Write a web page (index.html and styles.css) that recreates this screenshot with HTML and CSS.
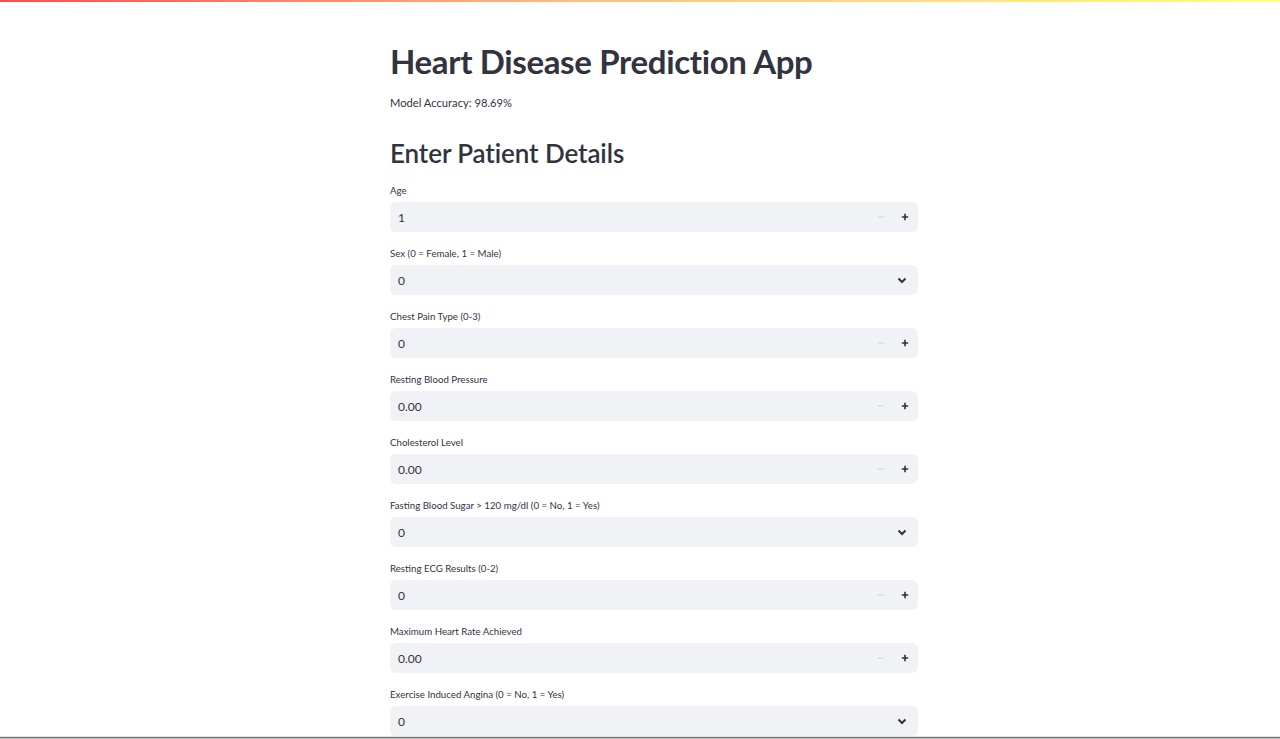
FILE: index.html
```html
<!DOCTYPE html>
<html>
<head>
<meta charset="utf-8">
<link rel="stylesheet" href="styles.css">
</head>
<body>
<div class="topbar"></div>
<main class="main">
  <h1 class="title">Heart Disease Prediction App</h1>
  <p class="acc">Model Accuracy: 98.69%</p>
  <h2 class="subtitle">Enter Patient Details</h2>

  <div class="field">
    <label class="label">Age</label>
    <div class="input"><span class="val">1</span>
      <span class="steps">
        <svg class="minus" viewBox="0 0 10 10"><path d="M1 5h8"/></svg>
        <svg class="plus" viewBox="0 0 10 10"><path d="M1 5h8M5 1v8"/></svg>
      </span></div>
  </div>

  <div class="field">
    <label class="label">Sex (0 = Female, 1 = Male)</label>
    <div class="input"><span class="val">0</span>
      <svg class="chev" viewBox="0 0 10 10"><path d="M1.5 3.5L5 7l3.5-3.5"/></svg></div>
  </div>

  <div class="field">
    <label class="label">Chest Pain Type (0-3)</label>
    <div class="input"><span class="val">0</span>
      <span class="steps">
        <svg class="minus" viewBox="0 0 10 10"><path d="M1 5h8"/></svg>
        <svg class="plus" viewBox="0 0 10 10"><path d="M1 5h8M5 1v8"/></svg>
      </span></div>
  </div>

  <div class="field">
    <label class="label">Resting Blood Pressure</label>
    <div class="input"><span class="val">0.00</span>
      <span class="steps">
        <svg class="minus" viewBox="0 0 10 10"><path d="M1 5h8"/></svg>
        <svg class="plus" viewBox="0 0 10 10"><path d="M1 5h8M5 1v8"/></svg>
      </span></div>
  </div>

  <div class="field">
    <label class="label">Cholesterol Level</label>
    <div class="input"><span class="val">0.00</span>
      <span class="steps">
        <svg class="minus" viewBox="0 0 10 10"><path d="M1 5h8"/></svg>
        <svg class="plus" viewBox="0 0 10 10"><path d="M1 5h8M5 1v8"/></svg>
      </span></div>
  </div>

  <div class="field">
    <label class="label">Fasting Blood Sugar &gt; 120 mg/dl (0 = No, 1 = Yes)</label>
    <div class="input"><span class="val">0</span>
      <svg class="chev" viewBox="0 0 10 10"><path d="M1.5 3.5L5 7l3.5-3.5"/></svg></div>
  </div>

  <div class="field">
    <label class="label">Resting ECG Results (0-2)</label>
    <div class="input"><span class="val">0</span>
      <span class="steps">
        <svg class="minus" viewBox="0 0 10 10"><path d="M1 5h8"/></svg>
        <svg class="plus" viewBox="0 0 10 10"><path d="M1 5h8M5 1v8"/></svg>
      </span></div>
  </div>

  <div class="field">
    <label class="label">Maximum Heart Rate Achieved</label>
    <div class="input"><span class="val">0.00</span>
      <span class="steps">
        <svg class="minus" viewBox="0 0 10 10"><path d="M1 5h8"/></svg>
        <svg class="plus" viewBox="0 0 10 10"><path d="M1 5h8M5 1v8"/></svg>
      </span></div>
  </div>

  <div class="field">
    <label class="label">Exercise Induced Angina (0 = No, 1 = Yes)</label>
    <div class="input"><span class="val">0</span>
      <svg class="chev" viewBox="0 0 10 10"><path d="M1.5 3.5L5 7l3.5-3.5"/></svg></div>
  </div>
</main>
<div class="winedge"></div>
</body>
</html>
```

FILE: styles.css
```css
html, body {
  margin: 0;
  padding: 0;
  background: #ffffff;
  overflow: hidden;
}
body {
  font-family: "Lato", "Noto Sans", sans-serif;
  color: #31333f;
}
.topbar {
  height: 2px;
  background: linear-gradient(90deg, #ff4b4b 0%, #ffbd80 45%, #fffd80 100%);
}
.main {
  width: 528px;
  margin: 0 0 0 390px;
  padding-top: 40px;
  display: flex;
  flex-direction: column;
}
.title {
  margin: 0;
  font-size: 33px;
  line-height: 38px;
  font-weight: 700;
  color: #31333f;
  letter-spacing: -0.35px;
}
.acc {
  margin: 14px 0 0;
  font-size: 11.2px;
  line-height: 18px;
}
.subtitle {
  margin: 24px 0 0;
  font-size: 26px;
  line-height: 34px;
  font-weight: 600;
  color: #31333f;
  letter-spacing: -0.1px;
}
.field {
  display: flex;
  flex-direction: column;
  margin-top: 13px;
}
.field + .field {
  margin-top: 14px;
}
.label {
  font-size: 9.7px;
  line-height: 14px;
  margin-bottom: 5px;
}
.input {
  height: 30px;
  background: #f0f2f6;
  border-radius: 6px;
  display: flex;
  align-items: center;
  justify-content: space-between;
  padding: 0 8px 0 8px;
}
.val {
  font-size: 12px;
}
.steps {
  display: flex;
  align-items: center;
  gap: 16px;
}
.steps svg {
  width: 8px;
  height: 8px;
  fill: none;
  stroke-linecap: butt;
}
.minus {
  stroke: #d0d2d8;
  stroke-width: 1.2;
}
.plus {
  stroke: #31333f;
  stroke-width: 2;
  margin-right: 1px;
}
.chev {
  width: 10px;
  height: 10px;
  fill: none;
  stroke: #31333f;
  stroke-width: 2;
  margin-right: 3px;
}
.winedge {
  position: fixed;
  left: 0;
  right: 0;
  bottom: 0;
  height: 3px;
  background: linear-gradient(#e6e6e6 0 1px, #6f6f6f 1px 2px, #bdbdbd 2px);
}
```
